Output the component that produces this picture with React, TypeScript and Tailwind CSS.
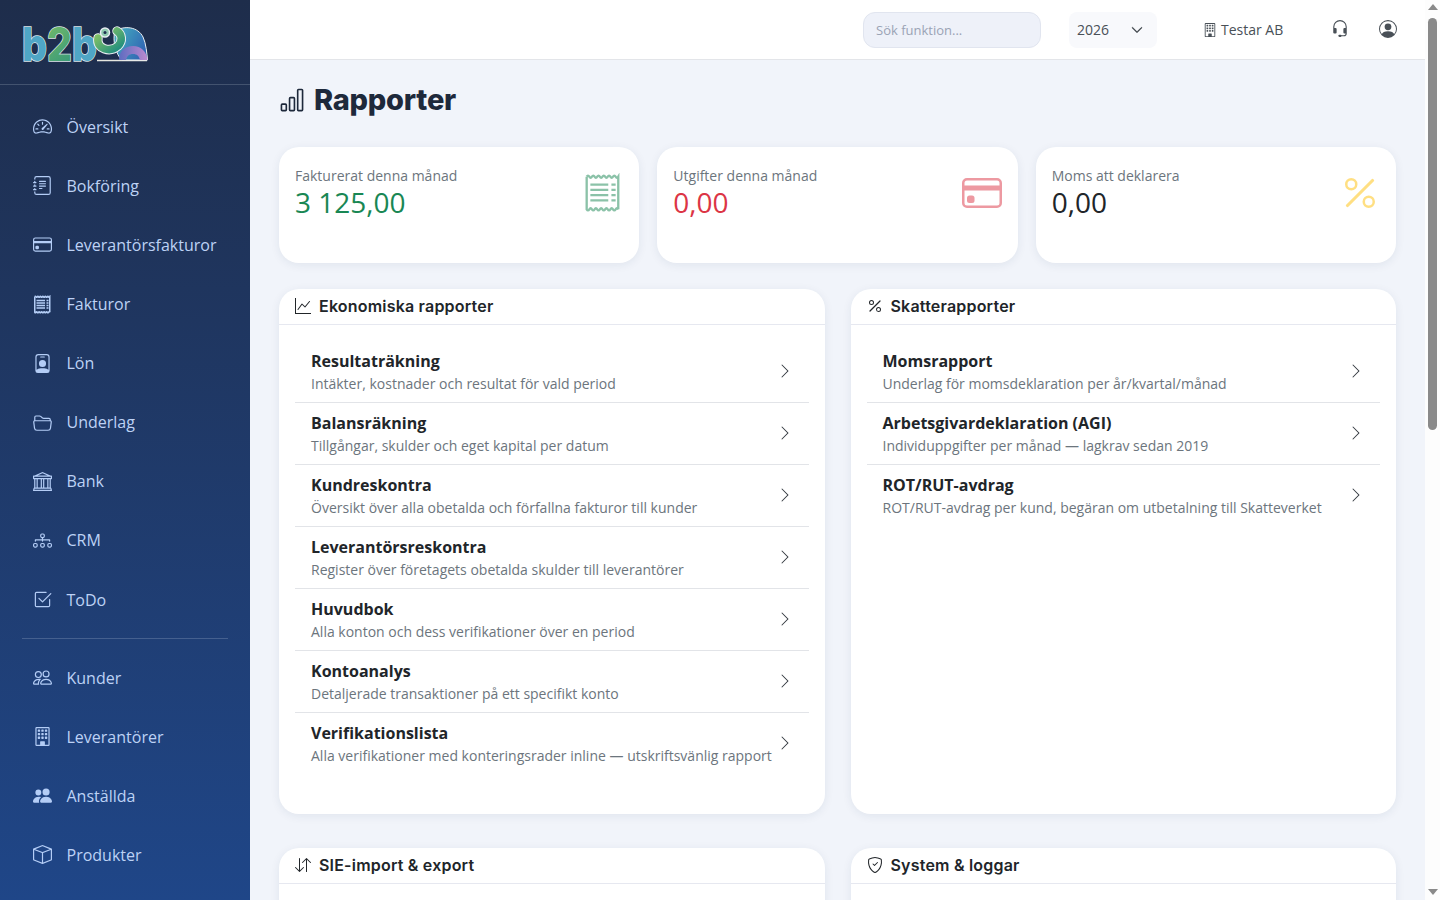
import type { ReactNode } from "react";
import {
  BsArrowDownUp,
  BsBank,
  BsBarChart,
  BsBox,
  BsBuilding,
  BsCheck2Square,
  BsChevronDown,
  BsChevronRight,
  BsCreditCard,
  BsDiagram3,
  BsFolder2Open,
  BsGraphUp,
  BsHeadset,
  BsJournalText,
  BsPeople,
  BsPeopleFill,
  BsPercent,
  BsPersonBadge,
  BsPersonCircle,
  BsShieldCheck,
  BsSpeedometer2,
} from "react-icons/bs";

function ReceiptIcon({ className }: { className?: string }) {
  const edge = "q1.25-2 2.5 0t2.5 0 2.5 0 2.5 0 2.5 0 2.5 0 2.5 0 2.5 0 2.5 0 2.5 0 2.5 0 2.5 0";
  return (
    <svg viewBox="0 0 36 38" width="1em" height="1em" fill="none" stroke="currentColor" strokeWidth="2.2" className={className}>
      <path d={`M2.5 3.5${edge}V34.5`} />
      <path d="M2.5 3.5V34.5q1.25 2 2.5 0t2.5 0 2.5 0 2.5 0 2.5 0 2.5 0 2.5 0 2.5 0 2.5 0 2.5 0 2.5 0 2.5 0" />
      <path d="M6 11h17M6 16h17M6 21h17M6 26h17M26 11h4M26 16h4M26 21h4M26 26h4" />
    </svg>
  );
}

const mainMenu = [
  { label: "Översikt", icon: <BsSpeedometer2 /> },
  { label: "Bokföring", icon: <BsJournalText /> },
  { label: "Leverantörsfakturor", icon: <BsCreditCard /> },
  { label: "Fakturor", icon: <ReceiptIcon className="stroke-[3]" /> },
  { label: "Lön", icon: <BsPersonBadge /> },
  { label: "Underlag", icon: <BsFolder2Open /> },
  { label: "Bank", icon: <BsBank /> },
  { label: "CRM", icon: <BsDiagram3 /> },
  { label: "ToDo", icon: <BsCheck2Square /> },
];

const registerMenu = [
  { label: "Kunder", icon: <BsPeople /> },
  { label: "Leverantörer", icon: <BsBuilding /> },
  { label: "Anställda", icon: <BsPeopleFill /> },
  { label: "Produkter", icon: <BsBox /> },
];

const ekonomiRows = [
  ["Resultaträkning", "Intäkter, kostnader och resultat för vald period"],
  ["Balansräkning", "Tillgångar, skulder och eget kapital per datum"],
  ["Kundreskontra", "Översikt över alla obetalda och förfallna fakturor till kunder"],
  ["Leverantörsreskontra", "Register över företagets obetalda skulder till leverantörer"],
  ["Huvudbok", "Alla konton och dess verifikationer över en period"],
  ["Kontoanalys", "Detaljerade transaktioner på ett specifikt konto"],
  ["Verifikationslista", "Alla verifikationer med konteringsrader inline — utskriftsvänlig rapport"],
];

const skatteRows = [
  ["Momsrapport", "Underlag för momsdeklaration per år/kvartal/månad"],
  ["Arbetsgivardeklaration (AGI)", "Individuppgifter per månad — lagkrav sedan 2019"],
  ["ROT/RUT-avdrag", "ROT/RUT-avdrag per kund, begäran om utbetalning till Skatteverket"],
];

function Logo() {
  return (
    <svg width="128" height="40" viewBox="0 0 128 40" className="overflow-visible" aria-label="b2b">
      <defs>
        <linearGradient id="logoBlue" x1="0" y1="0" x2="1" y2="1">
          <stop offset="0" stopColor="#62b5cf" />
          <stop offset="1" stopColor="#2f86b5" />
        </linearGradient>
        <linearGradient id="logoGreen" x1="0" y1="0" x2="1" y2="1">
          <stop offset="0" stopColor="#8cc663" />
          <stop offset="1" stopColor="#1d8c7f" />
        </linearGradient>
        <linearGradient id="logoBody" x1="0" y1="0" x2="1" y2="0.5">
          <stop offset="0" stopColor="#45b4c0" />
          <stop offset="1" stopColor="#3267b4" />
        </linearGradient>
        <linearGradient id="logoLeg" x1="0" y1="0" x2="1" y2="0">
          <stop offset="0" stopColor="#5d6cc0" />
          <stop offset="1" stopColor="#bd8ad0" />
        </linearGradient>
      </defs>
      <text
        x="0"
        y="36"
        textLength="75"
        lengthAdjust="spacingAndGlyphs"
        fontFamily="Inter, sans-serif"
        fontWeight="800"
        fontSize="46"
        stroke="#dfe6ea"
        strokeWidth="1.6"
        style={{ paintOrder: "stroke" }}
      >
        <tspan fill="#4fa6c6">b</tspan>
        <tspan fill="url(#logoGreen)">2</tspan>
        <tspan fill="#4fa6c6">b</tspan>
      </text>
      <path d="M75 35.500H125" stroke="#e6e6df" strokeWidth="1.600" />
      <path d="M93 6C103 0 116 2 121 12C124 18 125 29 125.500 35H100C94 30 90 15 93 6Z" fill="url(#logoBody)" stroke="#e9eef2" strokeWidth="1" />
      <path d="M97 35C97 26 103 21 111 21C119 21 125 27 125.500 35H118C117 31 115 29 111 29C107 29 105 31 104 35Z" fill="url(#logoLeg)" />
      <path d="M76 13C74 24 88 28 96 21C101 16 100 9 95 6" fill="none" stroke="#e9eef2" strokeWidth="9.500" strokeLinecap="round" />
      <path d="M76 13C74 24 88 28 96 21C101 16 100 9 95 6" fill="none" stroke="url(#logoGreen)" strokeWidth="7.500" strokeLinecap="round" />
      <circle cx="83" cy="7.500" r="4.500" fill="#8fc9b0" stroke="#e9eef2" strokeWidth="1.500" />
      <circle cx="83" cy="7.500" r="1.500" fill="#1e2f4f" />
    </svg>
  );
}

function NavItem({ label, icon }: { label: string; icon: ReactNode }) {
  return (
    <a className="flex h-[59.1px] items-center text-[16px] text-[#bdd2f5]">
      <span className="flex w-[66.5px] shrink-0 justify-center pl-[18px] text-[19px] text-[#b4cdf6]">{icon}</span>
      <span>{label}</span>
    </a>
  );
}

function Sidebar() {
  return (
    <aside className="sticky top-0 flex h-screen w-[250px] shrink-0 flex-col overflow-hidden bg-gradient-to-b from-[#1e2d4b] to-[#1f4688]">
      <div className="flex h-[85px] shrink-0 items-start border-b border-[#43536f] pl-[22px] pt-[25px]">
        <Logo />
      </div>
      <nav className="flex flex-col pt-[12.25px]">
        {mainMenu.map((item) => (
          <NavItem key={item.label} {...item} />
        ))}
      </nav>
      <div className="mx-[22px] my-[9px] border-t border-[#45608f]" />
      <nav className="flex flex-col">
        {registerMenu.map((item) => (
          <NavItem key={item.label} {...item} />
        ))}
      </nav>
    </aside>
  );
}

function Topbar() {
  return (
    <header className="sticky top-0 z-10 flex h-[60px] items-center border-b border-[#e3e5e9] bg-white pl-[613px] text-[14px] text-[#495057]">
      <input
        placeholder="Sök funktion..."
        className="h-[36px] w-[178px] rounded-[12px] border border-[#e1e5ef] bg-[#eef1f9] px-[12px] text-[13px] outline-none placeholder:text-[#9aa3b5]"
      />
      <div className="ml-[28px] flex h-[36px] w-[88px] items-center justify-between rounded-[8px] bg-[#f8f9fc] pl-[8px] pr-[14px]">
        <span>2026</span>
        <BsChevronDown className="text-[12px] text-[#343a40]" strokeWidth={0.8} />
      </div>
      <div className="ml-[46px] flex items-center gap-[4px]">
        <BsBuilding className="text-[14px]" />
        <span>Testar AB</span>
      </div>
      <BsHeadset className="ml-[48px] mt-[-1px] text-[18px]" />
      <BsPersonCircle className="ml-[30px] mt-[-1px] text-[18px]" />
    </header>
  );
}

function StatCard({ label, value, valueClass, icon }: { label: string; value: string; valueClass: string; icon: ReactNode }) {
  return (
    <div className="flex h-[116px] items-start justify-between rounded-[20px] bg-white px-[16px] pt-[18px] shadow-[0_2px_10px_rgba(30,50,90,0.08)]">
      <div>
        <div className="text-[14px] leading-[21px] text-[#6c757d]">{label}</div>
        <div className={`text-[28px] leading-[32px] ${valueClass}`}>{value}</div>
      </div>
      <div className="mt-[8px] text-[40px] leading-none">{icon}</div>
    </div>
  );
}

function ReportCard({ title, icon, rows, height }: { title: string; icon: ReactNode; rows: string[][]; height: string }) {
  return (
    <section className={`rounded-[20px] bg-white shadow-[0_2px_10px_rgba(30,50,90,0.08)] ${height}`}>
      <div className="flex h-[36px] items-center gap-[8px] border-b border-[#e6e8f0] pb-[2px] pl-[16px] font-['Inter',sans-serif] text-[16px] font-semibold tracking-[0.2px] text-[#212529]">
        <span className="text-[16px]">{icon}</span>
        {title}
      </div>
      <div className="px-[16px] pt-[16px]">
        {rows.map(([name, description]) => (
          <a key={name} className="flex h-[62px] items-center justify-between border-b border-[#e2e4e8] px-[16px] last:border-b-transparent">
            <div>
              <div className="text-[16px] font-bold leading-[24px] text-[#212529]">{name}</div>
              <div className="text-[14px] leading-[21px] text-[#6c757d]">{description}</div>
            </div>
            <BsChevronRight className="mt-[-2px] shrink-0 text-[16px] text-[#343a40]" />
          </a>
        ))}
      </div>
    </section>
  );
}

function WindowScrollbar() {
  return (
    <div className="sticky top-0 flex h-screen w-[15px] shrink-0 flex-col items-center bg-[#fdfdfd] pt-[4px]">
      <div className="h-0 w-0 border-x-[5px] border-b-[6px] border-x-transparent border-b-[#8a8a8a]" />
      <div className="mt-[8px] h-[412px] w-[9px] rounded-[5px] bg-[#8a8a8a]" />
      <div className="mt-auto mb-[5px] h-0 w-0 border-x-[5px] border-t-[6px] border-x-transparent border-t-[#8a8a8a]" />
    </div>
  );
}

export default function App() {
  return (
    <div className="flex min-h-screen bg-[#f1f4fa] font-['Open_Sans',sans-serif]">
      <Sidebar />
      <div className="min-w-0 flex-1">
        <Topbar />
        <main className="px-[29px] pb-[40px]">
          <h1 className="flex h-[87px] items-center gap-[9px] pb-[7px] font-['Inter',sans-serif] text-[29px] font-extrabold tracking-[-0.25px] text-[#1e293b]">
            <BsBarChart className="text-[26px]" />
            Rapporter
          </h1>
          <div className="grid grid-cols-3 gap-[18px]">
            <StatCard label="Fakturerat denna månad" value="3 125,00" valueClass="text-[#198754]" icon={<ReceiptIcon className="text-[#198754] opacity-50" />} />
            <StatCard label="Utgifter denna månad" value="0,00" valueClass="text-[#dc3545]" icon={<BsCreditCard className="text-[#dc3545] opacity-50" />} />
            <StatCard label="Moms att deklarera" value="0,00" valueClass="text-[#212529]" icon={<BsPercent className="text-[#ffc107] opacity-50" />} />
          </div>
          <div className="mt-[26px] grid grid-cols-2 gap-[26px]">
            <ReportCard title="Ekonomiska rapporter" icon={<BsGraphUp />} rows={ekonomiRows} height="h-[525px]" />
            <ReportCard title="Skatterapporter" icon={<BsPercent />} rows={skatteRows} height="h-[525px]" />
          </div>
          <div className="mt-[34px] grid grid-cols-2 gap-[26px]">
            <ReportCard title="SIE-import & export" icon={<BsArrowDownUp />} rows={[]} height="h-[300px]" />
            <ReportCard title="System & loggar" icon={<BsShieldCheck />} rows={[]} height="h-[300px]" />
          </div>
        </main>
      </div>
      <WindowScrollbar />
    </div>
  );
}
